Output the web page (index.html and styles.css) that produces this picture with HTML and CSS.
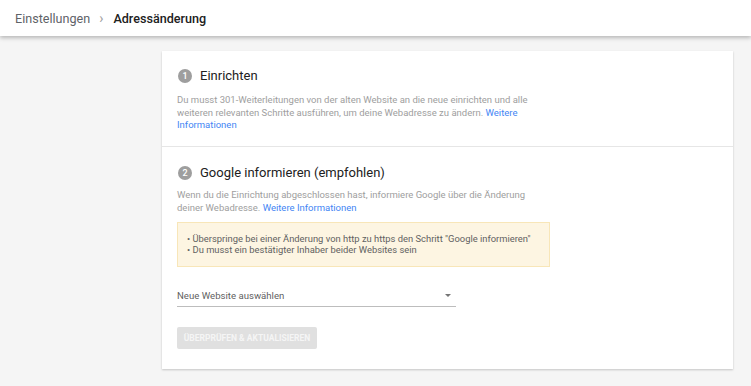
FILE: index.html
```html
<!DOCTYPE html>
<html lang="de">
    <head>
        <meta charset="UTF-8" />
        <title>Adressänderung</title>
        <link rel="stylesheet" href="styles.css">
    </head>
    <body>
        <header class="topbar">
            <span class="crumb">Einstellungen</span>
            <span class="crumb-sep">&rsaquo;</span>
            <span class="crumb crumb-current">Adressänderung</span>
        </header>
        <main class="page">
            <section class="card">
                <div class="step">
                    <h2 class="step-title"><span class="step-num">1</span>Einrichten</h2>
                    <p class="step-text">
                        Du musst 301-Weiterleitungen von der alten Website an die neue einrichten und alle<br />
                        weiteren relevanten Schritte ausführen, um deine Webadresse zu ändern.
                        <a href="#">Weitere Informationen</a>
                    </p>
                </div>
                <div class="step">
                    <h2 class="step-title"><span class="step-num">2</span>Google informieren (empfohlen)</h2>
                    <p class="step-text step-text-tight">
                        Wenn du die Einrichtung abgeschlossen hast, informiere Google über die Änderung<br />
                        deiner Webadresse. <a href="#">Weitere Informationen</a>
                    </p>
                    <div class="notice">
                        <div>• Überspringe bei einer Änderung von http zu https den Schritt "Google informieren"</div>
                        <div>• Du musst ein bestätigter Inhaber beider Websites sein</div>
                    </div>
                    <div class="select">
                        <span>Neue Website auswählen</span>
                        <span class="select-arrow"></span>
                    </div>
                    <button class="btn" disabled>Überprüfen &amp; Aktualisieren</button>
                </div>
            </section>
        </main>
    </body>
</html>
```

FILE: styles.css
```css
:root {
    --bg: #f5f5f5;
    --text-main: #212121;
    --text-sub: #9e9e9e;
    --link: #4285f4;
}
html,
body {
    margin: 0;
    background: var(--bg);
    font-family: Roboto, "Noto Sans", Arial, sans-serif;
    color: var(--text-main);
    -webkit-font-smoothing: antialiased;
}
.topbar {
    height: 36px;
    background: #fff;
    display: flex;
    align-items: center;
    padding: 0 15px;
    font-size: 12.6px;
    box-shadow: 0 2px 4px rgba(0, 0, 0, 0.25);
    position: relative;
}
.crumb {
    color: #5f6368;
}
.crumb-sep {
    color: #9e9e9e;
    margin: 0 10px 0 9px;
    font-size: 14px;
}
.crumb-current {
    color: #212121;
    font-weight: 500;
}
.page {
    padding: 15px 0 16px 162px;
}
.card {
    width: 571px;
    background: #fff;
    box-shadow: 0 1px 2px rgba(0, 0, 0, 0.2);
}
.step {
    padding: 15px 15px 14px 15px;
}
.step + .step {
    border-top: 1px solid #e6e6e6;
    padding-top: 16px;
    padding-bottom: 20px;
}
.step-title {
    margin: 0;
    font-size: 13px;
    font-weight: 400;
    line-height: 20px;
    display: flex;
    align-items: center;
    color: #212121;
}
.step-num {
    width: 14px;
    height: 14px;
    border-radius: 50%;
    background: #9e9e9e;
    color: #fff;
    font-size: 9px;
    font-weight: 500;
    display: inline-flex;
    align-items: center;
    justify-content: center;
    margin: 0 8px 0 1px;
}
.step-text {
    margin: 8px 0 0 0;
    font-size: 9.5px;
    line-height: 12.5px;
    color: var(--text-sub);
    max-width: 380px;
}
.step-text-tight {
    margin-top: 5px;
    line-height: 13.5px;
}
.step-text a {
    color: var(--link);
    text-decoration: none;
}
.notice {
    margin-top: 7px;
    width: 354px;
    padding: 10px 8px 10px 9px;
    background: #fdf5e2;
    border: 1px solid #f8e6b8;
    font-size: 9.4px;
    line-height: 11.5px;
    color: #616161;
}
.select {
    margin-top: 22px;
    width: 279px;
    height: 16px;
    border-bottom: 1px solid #bdbdbd;
    display: flex;
    justify-content: space-between;
    align-items: flex-start;
    font-size: 9.6px;
    color: #5f5f5f;
    padding-top: 1px;
}
.select-arrow {
    margin: 4px 5px 0 0;
    border-left: 3px solid transparent;
    border-right: 3px solid transparent;
    border-top: 3px solid #757575;
}
.btn {
    margin-top: 20px;
    height: 22px;
    width: 140px;
    border: none;
    border-radius: 2px;
    background: #e0e0e0;
    color: #f5f5f5;
    font-family: Roboto, Arial, sans-serif;
    font-size: 8.5px;
    font-weight: 700;
    text-transform: uppercase;
    padding: 0;
    display: block;
}
```
